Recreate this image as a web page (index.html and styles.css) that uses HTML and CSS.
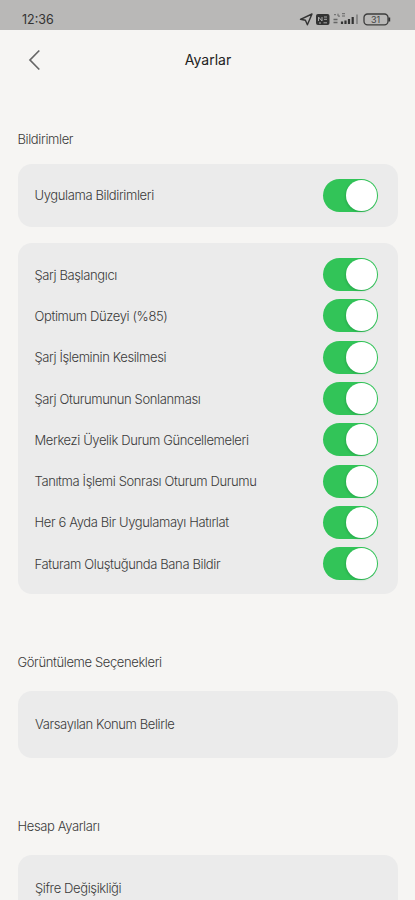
FILE: index.html
```html
<!DOCTYPE html>
<html lang="tr">
<head>
<meta charset="utf-8">
<title>Ayarlar</title>
<link rel="stylesheet" href="styles.css">
</head>
<body>
<div class="status">
  <span class="time">12:36</span>
  <svg class="status-icons" width="92" height="16" viewBox="0 0 92 16" aria-hidden="true">
    <path d="M1.5 8.3 13 3l-4.6 10.8-2-4.6z" fill="none" stroke="#333" stroke-width="1.4" stroke-linejoin="round"/>
    <rect x="17" y="3" width="13.5" height="11" rx="2" fill="#333"/>
    <path d="M19.5 10V6l3.5 4V6M25 6h3M25 8.3h3M20 12h2M24.5 11.8h3.5" fill="none" stroke="#aaa" stroke-width="1"/>
    <path d="M35 3.7h2M39 2.7v2.4h2M43 2.7h3M43 5h3" fill="none" stroke="#666" stroke-width="1"/>
    <path d="M34.5 8.5h4M34.5 11.5h4" stroke="#666" stroke-width="1.3"/>
    <path d="M43 13v-2.5M46.5 13V9.5M50 13V8M53.7 13V6" stroke="#333" stroke-width="2.2"/>
    <path d="M58 13V3.5" stroke="#777" stroke-width="1.4"/>
    <rect x="65" y="3" width="24" height="10.8" rx="3.6" fill="none" stroke="#3c3c3c" stroke-width="1.3"/>
    <path d="M90.3 6.5v4" stroke="#333" stroke-width="1.8"/>
    <text x="76.5" y="11.5" class="battery">31</text>
  </svg>
</div>
<header class="header">
  <svg class="back" width="14" height="22" viewBox="0 0 14 22" aria-hidden="true"><path d="M11.3 1.5 2 11l9.3 9.5" fill="none" stroke="#666" stroke-width="1.7"/></svg>
  <h1>Ayarlar</h1>
</header>
<main>
  <h2>Bildirimler</h2>
  <section class="card single">
    <div class="row"><span>Uygulama Bildirimleri</span><i class="toggle"></i></div>
  </section>
  <section class="card list">
    <div class="row"><span>Şarj Başlangıcı</span><i class="toggle"></i></div>
    <div class="row"><span>Optimum Düzeyi (%85)</span><i class="toggle"></i></div>
    <div class="row"><span>Şarj İşleminin Kesilmesi</span><i class="toggle"></i></div>
    <div class="row"><span>Şarj Oturumunun Sonlanması</span><i class="toggle"></i></div>
    <div class="row"><span>Merkezi Üyelik Durum Güncellemeleri</span><i class="toggle"></i></div>
    <div class="row"><span>Tanıtma İşlemi Sonrası Oturum Durumu</span><i class="toggle"></i></div>
    <div class="row"><span>Her 6 Ayda Bir Uygulamayı Hatırlat</span><i class="toggle"></i></div>
    <div class="row"><span>Faturam Oluştuğunda Bana Bildir</span><i class="toggle"></i></div>
  </section>
  <h2 class="later">Görüntüleme Seçenekleri</h2>
  <section class="card link"><span>Varsayılan Konum Belirle</span></section>
  <h2 class="later">Hesap Ayarları</h2>
  <section class="card link"><span>Şifre Değişikliği</span></section>
</main>
</body>
</html>
```
FILE: styles.css
```css
* { box-sizing: border-box; }
html { height: 900px; overflow: hidden; }
body {
  margin: 0;
  height: 900px;
  overflow: hidden;
  background: #f6f5f3;
  color: #3a3a3a;
  font: 300 13px/20px Inter, "Liberation Sans", sans-serif;
  letter-spacing: -0.38px;
}
.status {
  display: flex;
  justify-content: space-between;
  align-items: flex-end;
  height: 30px;
  padding: 0 24px 3px 22px;
  background: #b9b8b7;
}
.time { font: 400 12.5px/16px Inter, sans-serif; letter-spacing: 0; color: #333; padding-top: 1px; margin-bottom: -1px; }
.status-icons { display: block; }
.battery { font: 400 9px Inter, sans-serif; letter-spacing: 0; text-anchor: middle; fill: #444; }
.header {
  display: grid;
  grid-template-columns: 14px 1fr 14px;
  align-items: center;
  height: 60px;
  padding: 0 27px 0 28px;
}
.back { display: block; }
h1 { margin: 0; text-align: center; font-size: 14px; font-weight: 400; letter-spacing: 0; color: #222; }
main { padding: 39px 17px 0 18px; }
h2 { margin: 0 0 15px -0.5px; font-size: 13px; line-height: 20px; font-weight: 300; color: #3a3a3a; }
.card { background: #ebebeb; border-radius: 14px; padding: 0 20.5px 0 16.5px; }
.single { height: 63px; padding-top: 10.5px; }
.list { height: 351px; margin-top: 16px; padding-top: 11px; }
.row { display: flex; align-items: center; justify-content: space-between; height: 41.3px; }
.toggle {
  display: flex;
  justify-content: flex-end;
  width: 54.5px;
  height: 33px;
  padding: 1px;
  border-radius: 17px;
  background: #32c458;
}
.toggle::before { content: ""; width: 31px; height: 31px; border-radius: 50%; background: #fff; box-shadow: -1px 1px 2px #19803855; }
.later { margin-top: 58px; margin-bottom: 19px; }
.link { height: 67px; padding-left: 17px; display: flex; align-items: center; }
.link span { margin-top: -1px; }
```
